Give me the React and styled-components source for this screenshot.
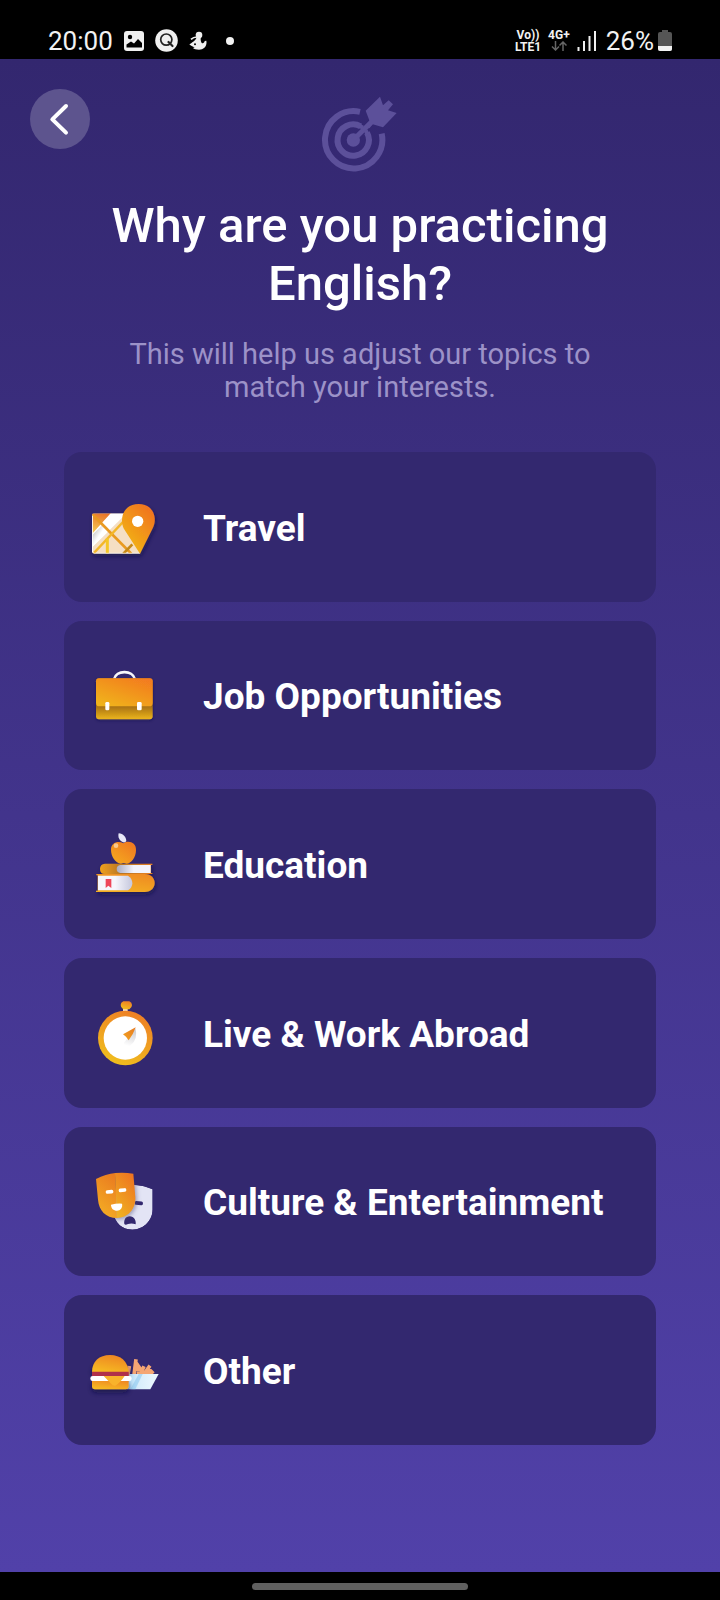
import React from "react";
import styled, { createGlobalStyle } from "styled-components";

const GlobalStyle = createGlobalStyle`
  *, *::before, *::after { box-sizing: border-box; }
  body { margin: 0; background: #000; font-family: Roboto, "Liberation Sans", sans-serif; }
  svg { display: block; flex: none; }
`;

const Screen = styled.div`
  display: flex;
  flex-direction: column;
  min-height: 100vh;
`;

const StatusBar = styled.div`
  display: flex;
  align-items: center;
  justify-content: space-between;
  height: 59px;
  padding: 22px 48px 0 48px;
  background: #000;
  color: #f2f2f2;
`;

const StatusGroup = styled.div`
  display: flex;
  align-items: center;
  gap: ${(p) => p.$gap}px;
  padding-left: ${(p) => p.$inset || 0}px;
`;

const StatusText = styled.span`
  font-size: 26px;
  line-height: 30px;
`;

const NetworkLabel = styled.span`
  display: flex;
  flex-direction: column;
  align-items: center;
  height: 24px;
  font-size: 12px;
  font-weight: 700;
  line-height: 12px;
`;

const Main = styled.main`
  flex: 1;
  display: flex;
  flex-direction: column;
  padding-bottom: 127px;
  background: linear-gradient(#33276f, #5141a9);
`;

const Header = styled.header`
  display: grid;
  grid-template-columns: 60px 1fr 60px;
  padding: 30px 30px 0;
`;

const BackButton = styled.button`
  display: flex;
  align-items: center;
  justify-content: center;
  width: 60px;
  height: 60px;
  padding: 0;
  border: 0;
  border-radius: 50%;
  background: #5d548e;
  cursor: pointer;
`;

const HeaderIcon = styled.div`
  display: flex;
  justify-content: center;
  padding-top: 6px;
`;

const Title = styled.h1`
  margin: 24px 64px 0;
  color: #fff;
  font-size: 49px;
  font-weight: 500;
  line-height: 58px;
  text-align: center;
`;

const Subtitle = styled.p`
  align-self: center;
  max-width: 500px;
  margin: 25px 0 48px;
  color: #9c92c8;
  font-size: 29px;
  line-height: 33px;
  text-align: center;
`;

const OptionList = styled.ul`
  flex: 1;
  display: grid;
  grid-auto-rows: 1fr;
  gap: 19px;
  margin: 0 64px;
  padding: 0;
  list-style: none;
`;

const OptionItem = styled.li`
  display: flex;
`;

const OptionButton = styled.button`
  flex: 1;
  display: flex;
  align-items: center;
  gap: 23px;
  min-height: 120px;
  padding: 0 16px;
  border: 0;
  border-radius: 18px;
  background: #33286f;
  color: #fff;
  font-family: inherit;
  font-size: 37px;
  font-weight: 700;
  line-height: 44px;
  text-align: left;
  cursor: pointer;
`;

const OptionLabel = styled.span`
  padding-top: 4px;
`;

const NavigationBar = styled.div`
  display: flex;
  align-items: center;
  justify-content: center;
  height: 28px;
  background: #000;
`;

const HomeHandle = styled.div`
  width: 30%;
  height: 7px;
  border-radius: 4px;
  background: #606060;
`;

const PictureIcon = () => (
  <svg width="20" height="20" viewBox="0 0 20 20" aria-hidden="true">
    <rect width="20" height="20" rx="3" fill="#f0f0f0" />
    <circle cx="6" cy="6" r="2.200" fill="#000" />
    <path d="M2.500 16.500v-3l4.500-3 3 2 4-4.500 4 4v4.500z" fill="#000" />
  </svg>
);

const SearchBadgeIcon = () => (
  <svg width="23" height="23" viewBox="0 0 23 23" aria-hidden="true">
    <circle cx="11.500" cy="11.500" r="11.300" fill="#f0f0f0" />
    <circle cx="11.300" cy="10.600" r="5.600" fill="none" stroke="#222" strokeWidth="1.700" />
    <path d="M13.500 13l4 4" stroke="#222" strokeWidth="2.200" strokeLinecap="round" />
  </svg>
);

const CreatureIcon = () => (
  <svg width="18" height="20" viewBox="0 0 54 60" aria-hidden="true" fill="#f0f0f0">
    <circle cx="30" cy="12" r="10" />
    <path d="M24 18l12 0c-2 8-1 13 2 18 5 2 8-1 9-6l5-1c3 16-7 27-22 27-9 0-15-1-18-5l5-2c-6-2-12-5-16-9 6-4 12-8 18-14z" />
    <path d="M6 25c5-5 10-7 18-7" stroke="#f0f0f0" strokeWidth="5" fill="none" />
    <circle cx="18" cy="40" r="3" fill="#000" />
  </svg>
);

const DotIcon = () => (
  <svg width="8" height="8" viewBox="0 0 8 8" aria-hidden="true">
    <circle cx="4" cy="4" r="4" fill="#f2f2f2" />
  </svg>
);

const DataArrowsIcon = () => (
  <svg width="16" height="10" viewBox="0 0 16 10" fill="none" stroke="#666" strokeWidth="1.500" aria-hidden="true">
    <path d="M4.500 0v9M1 5.500l3.500 3.500 3.500-3.500M12 10V1M8.500 4.500L12 1l3.500 3.500" />
  </svg>
);

const SignalIcon = () => (
  <svg width="19" height="20" viewBox="0 0 19 20" stroke="#f0f0f0" strokeWidth="2" aria-hidden="true">
    <path d="M1.500 20v-4M7 20V10M12.500 20V5M18 20V0" />
  </svg>
);

const BatteryIcon = () => (
  <svg width="14" height="21" viewBox="0 0 14 21" aria-hidden="true">
    <path d="M4 2V0h6v2h2q2 0 2 2v15q0 2-2 2H2q-2 0-2-2V4q0-2 2-2z" fill="#555" />
    <path d="M0 16h14v3q0 2-2 2H2q-2 0-2-2z" fill="#f2f2f2" />
  </svg>
);

const ChevronIcon = () => (
  <svg width="60" height="60" viewBox="30 55 180 180" fill="none" stroke="#fff" strokeWidth="12" strokeLinecap="round" strokeLinejoin="round" aria-hidden="true">
    <path d="M138 106L97 146l41 40" />
  </svg>
);

const TargetIcon = () => (
  <svg width="78" height="78" viewBox="903 75 234 234" fill="none" stroke="#5c509a" aria-hidden="true">
    <path d="M1020 125.500A86 86 0 1 0 1085 191" strokeWidth="18" />
    <path d="M1022 169A47 47 0 1 0 1041 188" strokeWidth="18" />
    <circle cx="1000" cy="210" r="20" fill="#5c509a" stroke="none" />
    <path d="M1000 210L1058 152" strokeWidth="15" />
    <path d="M1016 167l13 6M1037 181l7 15" strokeWidth="12" />
    <path d="M1037 122L1080 80l9 26 17-15 13 12-15 18 26 8-41 43-31-9-10 12-9-9 10-12z" fill="#5c509a" stroke="none" />
  </svg>
);

const TravelIcon = () => (
  <svg width="100" height="90" viewBox="60 96 300 270" aria-hidden="true">
    <defs>
      <linearGradient id="pin" x1="1" y1="0" x2="0.300" y2="1">
        <stop offset="0" stopColor="#f06a22" />
        <stop offset="1" stopColor="#f2b713" />
      </linearGradient>
      <linearGradient id="land" x1="0.500" y1="0" x2="0.300" y2="1">
        <stop offset="0" stopColor="#e8762b" />
        <stop offset="1" stopColor="#f5cf55" />
      </linearGradient>
      <linearGradient id="road" x1="0" y1="0" x2="1" y2="1">
        <stop offset="0" stopColor="#a6a5a5" />
        <stop offset="0.500" stopColor="#fff" />
      </linearGradient>
      <clipPath id="mapClip"><path d="M103 190H240V311H103q-7 0-7-7V197q0-7 7-7z" /></clipPath>
      <filter id="travelShadow" x="-30%" y="-30%" width="160%" height="170%">
        <feDropShadow dx="3" dy="8" stdDeviation="7" floodColor="#17103f" floodOpacity="0.600" />
      </filter>
    </defs>
    <g filter="url(#travelShadow)">
      <g clipPath="url(#mapClip)">
        <rect x="96" y="190" width="144" height="121" fill="#f5dfc4" />
        <path d="M96 190h58l-58 64z" fill="url(#land)" />
        <path d="M152 190h48l-102 100h-2v-38z" fill="#fff" />
        <path d="M96 256l32-32 12 25-44 43z" fill="url(#road)" />
        <path d="M186 214l54 96v-90z" fill="#c9b8a3" />
        <path d="M96 192l118 119" stroke="#e99a20" strokeWidth="8" />
        <path d="M100 311l90-96" stroke="#f3b72b" strokeWidth="7" />
        <path d="M142 265v46" stroke="#f5c627" strokeWidth="9" />
        <path d="M190 311l27-28" stroke="#c68918" strokeWidth="8" />
        <path d="M97 197v106q0 7 7 7H240" fill="none" stroke="#fff" strokeWidth="3" />
      </g>
      <path d="M240 311L194 240C177 212 187 162 236 162c45 0 58 44 42 73z" fill="url(#pin)" />
    </g>
    <circle cx="233" cy="214" r="17" fill="#fff" />
  </svg>
);

const BriefcaseIcon = () => (
  <svg width="100" height="90" viewBox="0 2 300 270" aria-hidden="true">
    <defs>
      <linearGradient id="caseTop" x1="0.900" y1="0" x2="0.200" y2="1">
        <stop offset="0" stopColor="#f37a20" />
        <stop offset="1" stopColor="#f0b31c" />
      </linearGradient>
      <linearGradient id="caseBottom" gradientUnits="userSpaceOnUse" x1="0" y1="170" x2="0" y2="210">
        <stop offset="0" stopColor="#a66f11" />
        <stop offset="1" stopColor="#ecb51d" />
      </linearGradient>
      <filter id="caseShadow" x="-20%" y="-20%" width="140%" height="150%">
        <feDropShadow dx="0" dy="4" stdDeviation="5" floodColor="#17103f" floodOpacity="0.500" />
      </filter>
    </defs>
    <path d="M102 90c6-28 56-30 63 0" fill="none" stroke="#f8f8fc" strokeWidth="8" />
    <g filter="url(#caseShadow)">
      <rect x="48" y="87" width="170" height="123" rx="9" fill="url(#caseBottom)" />
      <path d="M57 87h152q9 0 9 9v64q0 11-10 11H58q-10 0-10-11V96q0-9 9-9z" fill="url(#caseTop)" />
    </g>
    <rect x="76" y="158" width="12" height="25" rx="4" fill="#fff" />
    <rect x="171" y="158" width="14" height="25" rx="4" fill="#fff" />
  </svg>
);

const EducationIcon = () => (
  <svg width="100" height="90" viewBox="0 -2 300 270" aria-hidden="true">
    <defs>
      <linearGradient id="apple" x1="1" y1="0" x2="0.200" y2="1">
        <stop offset="0" stopColor="#ef7420" />
        <stop offset="1" stopColor="#f5a81f" />
      </linearGradient>
      <linearGradient id="coverTop" x1="0" x2="1">
        <stop offset="0" stopColor="#f1a21e" />
        <stop offset="0.400" stopColor="#b87524" />
        <stop offset="1" stopColor="#e8801f" />
      </linearGradient>
      <linearGradient id="coverBottom" x1="1" y1="0" x2="0.500" y2="1">
        <stop offset="0" stopColor="#ee8720" />
        <stop offset="1" stopColor="#f3ad20" />
      </linearGradient>
      <linearGradient id="pagesTop" x1="0" x2="1">
        <stop offset="0" stopColor="#a9abc0" />
        <stop offset="0.500" stopColor="#f3f3fa" />
      </linearGradient>
      <linearGradient id="pagesBottom" x1="0" x2="1">
        <stop offset="0.500" stopColor="#f6f6fc" />
        <stop offset="1" stopColor="#c5c7dd" />
      </linearGradient>
      <filter id="bookShadow" x="-20%" y="-20%" width="140%" height="150%">
        <feDropShadow dx="3" dy="8" stdDeviation="7" floodColor="#17103f" floodOpacity="0.600" />
      </filter>
    </defs>
    <g filter="url(#bookShadow)">
      <path d="M75 132h142v4h-4v24h4v3H75q-15 0-15-15t15-16z" fill="url(#coverTop)" />
      <path d="M49 163h145c40 0 40 54 0 54H48v-4h5v-46h-4z" fill="url(#coverBottom)" />
    </g>
    <path d="M121 136h91v24h-91q-11-2-11-12t11-12z" fill="url(#pagesTop)" />
    <path d="M54 168h90q13 8 13 23 0 14-13 21H54z" fill="url(#pagesBottom)" />
    <path d="M77 178h17v27l-9-7-8 7z" fill="#ee4659" />
    <path d="M130 71c15-10 39-3 38 20 0 22-14 41-29 41q-8-4-16 0c-17-2-30-22-30-42 0-22 22-28 37-19z" fill="url(#apple)" />
    <circle cx="108" cy="78" r="7" fill="#fce1bb" opacity="0.700" />
    <path d="M129 68c-11-5-16-15-13-27 14 1 22 11 23 23-3 4-6 5-10 4z" fill="#e9e9f8" />
  </svg>
);

const CompassIcon = () => (
  <svg width="100" height="90" viewBox="0 8 300 270" aria-hidden="true">
    <defs>
      <linearGradient id="rim" x1="0.700" y1="0" x2="0.300" y2="1">
        <stop offset="0" stopColor="#ee7e25" />
        <stop offset="1" stopColor="#f0c01e" />
      </linearGradient>
      <linearGradient id="needle" x1="1" y1="0" x2="0" y2="1">
        <stop offset="0" stopColor="#e97a20" />
        <stop offset="1" stopColor="#f0a322" />
      </linearGradient>
      <linearGradient id="needleShade" x1="0.600" y1="0" x2="0.400" y2="1">
        <stop offset="0" stopColor="#c9c9ce" />
        <stop offset="1" stopColor="#fff" />
      </linearGradient>
    </defs>
    <path d="M129 67h14v12h-14z" fill="#f7ddc0" />
    <path d="M130 48h18q8 3 8 11t-8 13h-18q-8-5-8-13t8-11z" fill="url(#rim)" />
    <circle cx="136" cy="158" r="82" fill="url(#rim)" />
    <circle cx="136" cy="158" r="65" fill="#fff" />
    <path d="M166 128q9 32-14 52-14 8-21-6z" fill="url(#needleShade)" />
    <path d="M167 126L129 147l9 7 8 11q14-18 21-39z" fill="url(#needle)" />
  </svg>
);

const MasksIcon = () => (
  <svg width="100" height="90" viewBox="0 4 300 270" aria-hidden="true">
    <defs>
      <linearGradient id="maskLeft" x1="0.700" y1="0" x2="0.300" y2="1">
        <stop offset="0" stopColor="#ea7c20" />
        <stop offset="1" stopColor="#f4ae24" />
      </linearGradient>
      <linearGradient id="maskRight" x1="0.800" y1="0" x2="0.200" y2="1">
        <stop offset="0" stopColor="#ee7420" />
        <stop offset="1" stopColor="#efb222" />
      </linearGradient>
      <filter id="maskShadow" x="-20%" y="-20%" width="150%" height="150%">
        <feDropShadow dx="4" dy="4" stdDeviation="6" floodColor="#4b456f" floodOpacity="0.500" />
      </filter>
      <clipPath id="backMask"><path d="M108 101q54-22 110 3v60c0 31-25 61-61 61-31 0-51-19-57-49z" /></clipPath>
    </defs>
    <g clipPath="url(#backMask)">
      <path d="M108 101q54-22 110 3v60c0 31-25 61-61 61-31 0-51-19-57-49z" fill="#e3e4f5" />
      <rect x="163" y="140" width="26" height="11" rx="5" fill="#33286f" transform="rotate(6 176 145)" />
      <path d="M133 208c-2-12 4-23 16-23 13 0 20 13 18 24q-12-5-23-1-8 5-11 0z" fill="#33286f" />
      <path d="M48 73q54-23 112-16l6 71c2 36-24 62-55 62-38-1-55-24-58-57z" fill="#a8a5bf" filter="url(#maskShadow)" />
    </g>
    <path d="M48 73q29-15 58-18l5 135c-34-1-54-22-57-55z" fill="url(#maskLeft)" />
    <path d="M105 55q28-3 55 2l6 71c2 36-24 62-55 62z" fill="url(#maskRight)" />
    <rect x="77" y="106" width="23" height="11" rx="5" fill="#fff" transform="rotate(-5 88 111)" />
    <rect x="116" y="101" width="23" height="11" rx="5" fill="#fff" transform="rotate(-5 127 106)" />
    <path d="M93 150q16-4 33-3c3 11-5 21-15 21-11 0-18-7-18-18z" fill="#fff" />
  </svg>
);

const BurgerIcon = () => (
  <svg width="100" height="90" viewBox="0 -30 300 270" aria-hidden="true">
    <defs>
      <linearGradient id="bun" x1="0.700" y1="0" x2="0.300" y2="1">
        <stop offset="0" stopColor="#ee8423" />
        <stop offset="1" stopColor="#f6bb23" />
      </linearGradient>
      <linearGradient id="box" x1="0" x2="1">
        <stop offset="0" stopColor="#a9d9f7" />
        <stop offset="0.350" stopColor="#d7edfb" />
        <stop offset="1" stopColor="#eef8ff" />
      </linearGradient>
      <filter id="foodShadow" x="-20%" y="-20%" width="140%" height="170%">
        <feDropShadow dx="0" dy="10" stdDeviation="8" floodColor="#17103f" floodOpacity="0.700" />
      </filter>
    </defs>
    <path d="M143 124l5-31M162 120l6-47M166 80l22 32M160 97l28 6M182 116l10-22M194 114l16-22M202 98l18 18M170 114h46" stroke="#f5a673" strokeWidth="11" fill="none" />
    <path d="M148 117h88l-25 46h-70z" fill="url(#box)" />
    <path d="M176 117h12l-22 46h-15z" fill="#8fc9f0" opacity="0.600" />
    <g filter="url(#foodShadow)">
      <path d="M36 112c0-33 22-52 54-52s54 19 56 52z" fill="url(#bun)" />
      <path d="M36 134h110v20q0 9-9 9H45q-9 0-9-9z" fill="url(#bun)" />
    </g>
    <path d="M36 110h110v14H36z" fill="#b0304a" />
    <rect x="31" y="123" width="124" height="15" rx="7" fill="#fff" />
    <path d="M71 123h63q-13 20-28 29-8 1-12-5z" fill="#f8b32b" />
  </svg>
);

const OPTIONS = [
  { label: "Travel", Icon: TravelIcon },
  { label: "Job Opportunities", Icon: BriefcaseIcon },
  { label: "Education", Icon: EducationIcon },
  { label: "Live & Work Abroad", Icon: CompassIcon },
  { label: "Culture & Entertainment", Icon: MasksIcon },
  { label: "Other", Icon: BurgerIcon },
];

export default function App() {
  return (
    <Screen>
      <GlobalStyle />
      <StatusBar>
        <StatusGroup $gap={11}>
          <StatusText>20:00</StatusText>
          <PictureIcon />
          <SearchBadgeIcon />
          <CreatureIcon />
          <StatusGroup $inset={8}>
            <DotIcon />
          </StatusGroup>
        </StatusGroup>
        <StatusGroup $gap={7}>
          <NetworkLabel>
            <span>Vo))</span>
            <span>LTE1</span>
          </NetworkLabel>
          <NetworkLabel>
            <span>4G+</span>
            <DataArrowsIcon />
          </NetworkLabel>
          <SignalIcon />
          <StatusGroup $gap={4} $inset={3}>
            <StatusText>26%</StatusText>
            <BatteryIcon />
          </StatusGroup>
        </StatusGroup>
      </StatusBar>
      <Main>
        <Header>
          <BackButton type="button" aria-label="Back">
            <ChevronIcon />
          </BackButton>
          <HeaderIcon>
            <TargetIcon />
          </HeaderIcon>
        </Header>
        <Title>Why are you practicing English?</Title>
        <Subtitle>This will help us adjust our topics to match your interests.</Subtitle>
        <OptionList>
          {OPTIONS.map(({ label, Icon }) => (
            <OptionItem key={label}>
              <OptionButton type="button">
                <Icon />
                <OptionLabel>{label}</OptionLabel>
              </OptionButton>
            </OptionItem>
          ))}
        </OptionList>
      </Main>
      <NavigationBar>
        <HomeHandle />
      </NavigationBar>
    </Screen>
  );
}
